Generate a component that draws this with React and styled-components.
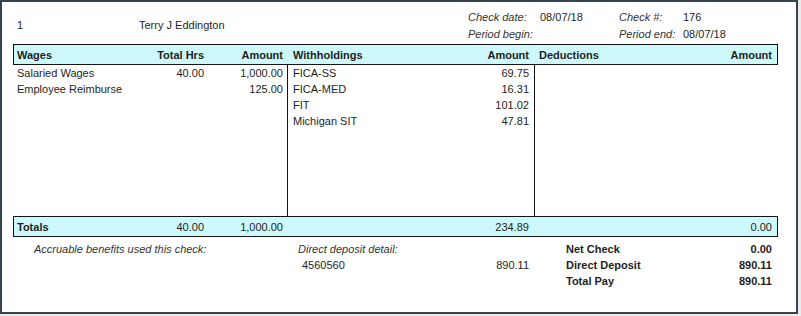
import React from 'react';
import styled, { createGlobalStyle } from 'styled-components';

const GlobalStyle = createGlobalStyle`
  body {
    margin: 0;
    background: #ebebeb;
    font-family: "Liberation Sans", Arial, sans-serif;
    font-size: 11px;
    color: #1e1e1e;
  }
`;

const Frame = styled.div`
  box-sizing: border-box;
  width: 798px;
  height: 314px;
  border: 2px solid #36424f;
  background: #fff;
  padding-left: 11px;
`;

const TopBar = styled.div`
  display: grid;
  grid-template-columns: 122px 329px 72px 79px 64px 1fr;
  grid-template-rows: 17px 17px;
  align-items: center;
  height: 42px;
  box-sizing: border-box;
  padding: 6px 0 0 4px;
`;

const Ident = styled.div`
  grid-row: 1 / span 2;
  align-self: center;
  padding-bottom: 1px;
`;

const Label = styled.div`
  font-style: italic;
  color: #333;
`;

const Value = styled.div``;

const Grid = styled.div`
  box-sizing: border-box;
  width: 765px;
  display: grid;
  grid-template-columns: 274px 247px 1fr;
  border: 1px solid transparent;
  border-top-width: 0;
  border-bottom-width: 0;
`;

const Band = styled(Grid)`
  height: 21px;
  border: 1px solid #141414;
  background: #cdf9fc;
  align-items: center;
`;

const Body = styled(Grid)`
  height: 151px;
`;

const Footer = styled(Grid)`
  padding-top: 4px;
`;

const Group = styled.div`
  box-sizing: border-box;
  display: flex;
  flex-direction: column;
  border-right: 1px solid ${({ $divider }) => ($divider ? '#141414' : 'transparent')};
  padding: ${({ $pad }) => $pad};
`;

const Line = styled.div`
  display: grid;
  grid-template-columns: ${({ $cols }) => $cols};
  align-items: center;
  height: 16px;
  font-weight: ${({ $bold }) => ($bold ? 'bold' : 'normal')};
  padding-left: ${({ $indent }) => $indent || 0}px;
`;

const Num = styled.span`
  text-align: right;
`;

const WAGE_COLS = '1fr 70px 79px';
const AMT_COLS = '1fr auto';

const WAGES_PAD = '0 4px 0 3px';
const WH_PAD = '0 5px 0 5px';
const DED_PAD = '0 4px 0 4px';

const wages = [
  { name: 'Salaried Wages', hrs: '40.00', amount: '1,000.00' },
  { name: 'Employee Reimburse', hrs: '', amount: '125.00' },
];

const withholdings = [
  { name: 'FICA-SS', amount: '69.75' },
  { name: 'FICA-MED', amount: '16.31' },
  { name: 'FIT', amount: '101.02' },
  { name: 'Michigan SIT', amount: '47.81' },
];

const summary = [
  { name: 'Net Check', amount: '0.00' },
  { name: 'Direct Deposit', amount: '890.11' },
  { name: 'Total Pay', amount: '890.11' },
];

const App = () => (
  <>
    <GlobalStyle />
    <Frame>
      <TopBar>
        <Ident>1</Ident>
        <Ident>Terry J Eddington</Ident>
        <Label>Check date:</Label>
        <Value>08/07/18</Value>
        <Label>Check #:</Label>
        <Value>176</Value>
        <Label>Period begin:</Label>
        <Value></Value>
        <Label>Period end:</Label>
        <Value>08/07/18</Value>
      </TopBar>

      <Band>
        <Group $pad={WAGES_PAD}>
          <Line $cols={WAGE_COLS} $bold>
            <span>Wages</span>
            <Num>Total Hrs</Num>
            <Num>Amount</Num>
          </Line>
        </Group>
        <Group $pad={WH_PAD}>
          <Line $cols={AMT_COLS} $bold>
            <span>Withholdings</span>
            <Num>Amount</Num>
          </Line>
        </Group>
        <Group $pad={DED_PAD}>
          <Line $cols={AMT_COLS} $bold>
            <span>Deductions</span>
            <Num>Amount</Num>
          </Line>
        </Group>
      </Band>

      <Body>
        <Group $pad={WAGES_PAD} $divider>
          {wages.map(w => (
            <Line key={w.name} $cols={WAGE_COLS}>
              <span>{w.name}</span>
              <Num>{w.hrs}</Num>
              <Num>{w.amount}</Num>
            </Line>
          ))}
        </Group>
        <Group $pad={WH_PAD} $divider>
          {withholdings.map(w => (
            <Line key={w.name} $cols={AMT_COLS}>
              <span>{w.name}</span>
              <Num>{w.amount}</Num>
            </Line>
          ))}
        </Group>
        <Group $pad={DED_PAD} />
      </Body>

      <Band>
        <Group $pad={WAGES_PAD}>
          <Line $cols={WAGE_COLS}>
            <b>Totals</b>
            <Num>40.00</Num>
            <Num>1,000.00</Num>
          </Line>
        </Group>
        <Group $pad={WH_PAD}>
          <Line $cols={AMT_COLS}>
            <span></span>
            <Num>234.89</Num>
          </Line>
        </Group>
        <Group $pad={DED_PAD}>
          <Line $cols={AMT_COLS}>
            <span></span>
            <Num>0.00</Num>
          </Line>
        </Group>
      </Band>

      <Footer>
        <Group $pad="0 4px 0 20px">
          <Line $cols="1fr">
            <Label>Accruable benefits used this check:</Label>
          </Line>
        </Group>
        <Group $pad="0 5px 0 10px">
          <Line $cols="1fr">
            <Label>Direct deposit detail:</Label>
          </Line>
          <Line $cols={AMT_COLS} $indent={4}>
            <span>4560560</span>
            <Num>890.11</Num>
          </Line>
        </Group>
        <Group $pad="0 4px 0 31px">
          {summary.map(s => (
            <Line key={s.name} $cols={AMT_COLS} $bold>
              <span>{s.name}</span>
              <Num>{s.amount}</Num>
            </Line>
          ))}
        </Group>
      </Footer>
    </Frame>
  </>
);

export default App;
